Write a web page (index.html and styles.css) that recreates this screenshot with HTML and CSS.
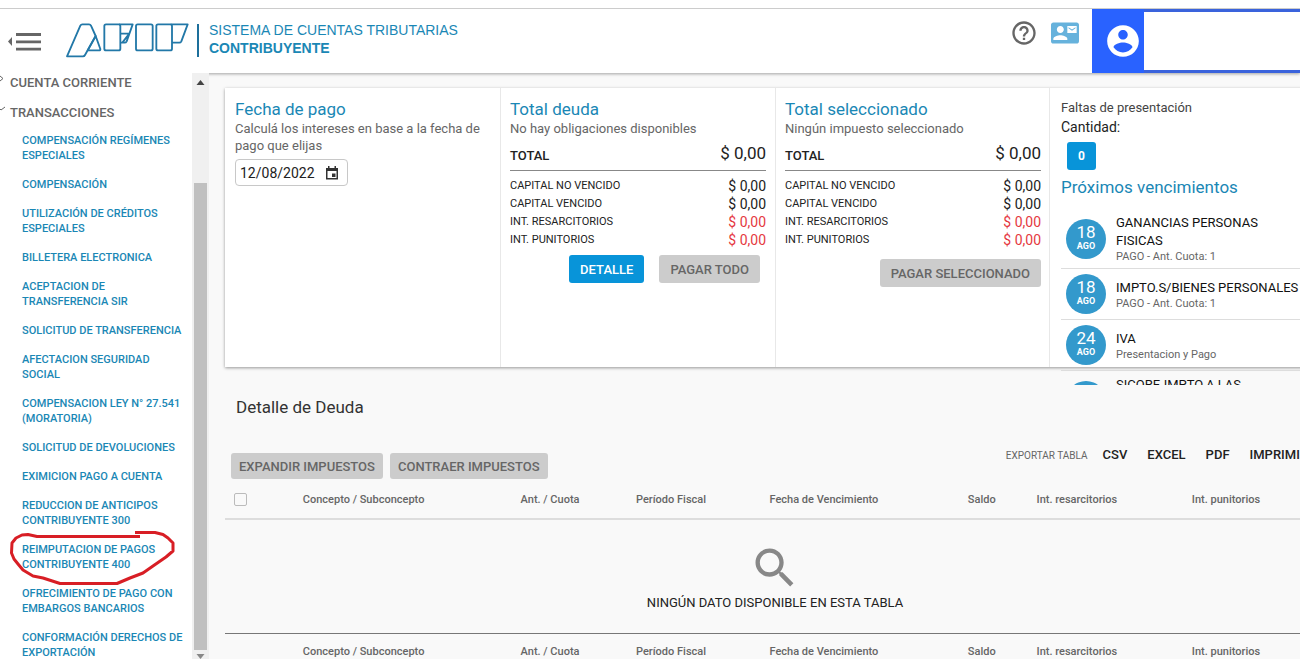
FILE: index.html
```html
<!DOCTYPE html>
<html lang="es">
<head>
<meta charset="utf-8">
<title>Sistema de Cuentas Tributarias</title>
<link rel="stylesheet" href="styles.css">
</head>
<body>
<header class="topbar">
  <button class="menu-toggle" aria-label="Ocultar menú">
    <svg width="34" height="20" viewBox="0 0 34 20"><path d="M4 5v9L0 9.500z" fill="#666"/><path d="M8 2.500h25M8 9.800h25M8 17.200h25" stroke="#666" stroke-width="2.800"/></svg>
  </button>
  <svg class="logo" viewBox="197 71 369 105" role="img" aria-label="AFIP">
    <g fill="none" stroke="#2278a8" stroke-width="5.500" stroke-linejoin="round">
      <path d="M200 171 240 79q2-4 6-4h20q4 0 6 4l14 31-32 57q-2 4-6 4z"/>
      <path d="M286 110 300 149q1 4-4 4h-34z"/>
      <rect x="312" y="75" width="48" height="78" rx="5"/>
      <path d="M356 75h41l-18 51q-2 4-6 4h-13M360 103h27l-21 27"/>
      <rect x="407" y="75" width="50" height="78" rx="5"/>
      <rect x="468" y="75" width="47" height="78" rx="5"/>
      <path d="M511 75h51l-19 51q-2 4-6 4h-22"/>
    </g>
  </svg>
  <div class="brand">
    <span>SISTEMA DE CUENTAS TRIBUTARIAS</span>
    <strong>CONTRIBUYENTE</strong>
  </div>
  <div class="tools">
    <button class="tool" aria-label="Ayuda">
      <svg width="28" height="28" viewBox="0 0 24 24" fill="#666"><path d="M11 18h2v-2h-2v2zm1-16C6.480 2 2 6.480 2 12s4.480 10 10 10 10-4.480 10-10S17.520 2 12 2zm0 18c-4.410 0-8-3.590-8-8s3.590-8 8-8 8 3.590 8 8-3.590 8-8 8zm0-14c-2.210 0-4 1.790-4 4h2c0-1.100.9-2 2-2s2 .9 2 2c0 2-3 1.750-3 5h2c0-2.250 3-2.500 3-5 0-2.210-1.790-4-4-4z"/></svg>
    </button>
    <button class="tool" aria-label="Contacto">
      <svg width="28" height="28" viewBox="0 0 24 24" fill="#66b2dc"><path d="M21 8V7l-3 2-3-2v1l3 2 3-2zm1-5H2C.9 3 0 3.900 0 5v14c0 1.100.9 2 2 2h20c1.100 0 1.990-.9 1.990-2L24 5c0-1.100-.9-2-2-2zM8 6c1.660 0 3 1.340 3 3s-1.340 3-3 3-3-1.340-3-3 1.340-3 3-3zm6 12H2v-1c0-2 4-3.100 6-3.100s6 1.100 6 3.100v1zm8-6h-8V6h8v6z"/></svg>
    </button>
  </div>
  <div class="account">
    <button class="avatar" aria-label="Cuenta">
      <svg width="38" height="38" viewBox="0 0 24 24" fill="#fff"><path d="M12 2C6.480 2 2 6.480 2 12s4.480 10 10 10 10-4.480 10-10S17.520 2 12 2zm0 3c1.660 0 3 1.340 3 3s-1.340 3-3 3-3-1.340-3-3 1.340-3 3-3zm0 14.200c-2.500 0-4.710-1.280-6-3.220.03-1.990 4-3.080 6-3.080 1.990 0 5.970 1.090 6 3.080-1.290 1.940-3.500 3.220-6 3.220z"/></svg>
    </button>
  </div>
</header>

<div class="shell">
  <nav class="sidebar">
    <div class="menu">
      <button class="section"><svg class="chev" viewBox="0 0 6 10"><path d="M0 2l3 2.500L0 7"/></svg>CUENTA CORRIENTE</button>
      <button class="section"><svg class="chev" viewBox="0 0 6 10"><path d="M-1 4l2 2 4-3"/></svg>TRANSACCIONES</button>
      <ul class="links">
        <li><a href="#">COMPENSACIÓN REGÍMENES ESPECIALES</a></li>
        <li><a href="#">COMPENSACIÓN</a></li>
        <li><a href="#">UTILIZACIÓN DE CRÉDITOS ESPECIALES</a></li>
        <li><a href="#">BILLETERA ELECTRONICA</a></li>
        <li><a href="#">ACEPTACION DE<br>TRANSFERENCIA SIR</a></li>
        <li><a href="#">SOLICITUD DE TRANSFERENCIA</a></li>
        <li><a href="#">AFECTACION SEGURIDAD SOCIAL</a></li>
        <li><a href="#">COMPENSACION LEY N° 27.541 (MORATORIA)</a></li>
        <li><a href="#">SOLICITUD DE DEVOLUCIONES</a></li>
        <li><a href="#">EXIMICION PAGO A CUENTA</a></li>
        <li><a href="#">REDUCCION DE ANTICIPOS CONTRIBUYENTE 300</a></li>
        <li class="marked"><a href="#">REIMPUTACION DE PAGOS CONTRIBUYENTE 400</a>
          <svg class="mark" width="170" height="60" viewBox="0 0 170 60"><path d="M131 9.500H28L19 7.500 13 8 7 11 3 16 2.500 26 5 32 9 37 14 43 24 49 34 51 51 56.500H108L121 51 134 46 144 39 157 30 164 24V16L159 11 154 7.500 146 5.500H126" fill="none" stroke="#d81e25" stroke-width="3" stroke-linejoin="round"/></svg></li>
        <li><a href="#">OFRECIMIENTO DE PAGO CON EMBARGOS BANCARIOS</a></li>
        <li><a href="#">CONFORMACIÓN DERECHOS DE EXPORTACIÓN</a></li>
      </ul>
    </div>
    <div class="scroll" aria-hidden="true">
      <svg width="9" height="5" viewBox="0 0 9 5"><path d="M4.500 0 8.500 5h-8z" fill="#444"/></svg>
      <div class="track"><div class="thumb"></div></div>
      <svg width="9" height="5" viewBox="0 0 9 5"><path d="M4.500 5 8.500 0h-8z" fill="#888"/></svg>
    </div>
  </nav>

  <main class="content">
    <section class="cards">
      <article class="card">
        <h2>Fecha de pago</h2>
        <label class="hint" for="fecha">Calculá los intereses en base a la fecha de pago que elijas</label>
        <div class="date">
          <input id="fecha" type="text" value="12/08/2022">
          <button aria-label="Abrir calendario"><svg width="14" height="14" viewBox="0 0 14 14" fill="#333"><path fill-rule="evenodd" d="M1 2h2V0h1.500v2h5V0H11v2h2v11.500H1zM2.500 5v7h9V5z"/><path d="M7 7.500h3.500V11H7z"/></svg></button>
        </div>
      </article>
      <article class="card">
        <h2>Total deuda</h2>
        <p class="hint">No hay obligaciones disponibles</p>
        <dl class="total"><dt>TOTAL</dt><dd>$ 0,00</dd></dl>
        <dl class="lines">
          <dt>CAPITAL NO VENCIDO</dt><dd>$ 0,00</dd>
          <dt>CAPITAL VENCIDO</dt><dd>$ 0,00</dd>
          <dt>INT. RESARCITORIOS</dt><dd class="red">$ 0,00</dd>
          <dt>INT. PUNITORIOS</dt><dd class="red">$ 0,00</dd>
        </dl>
        <div class="actions"><button class="btn primary">DETALLE</button><button class="btn">PAGAR TODO</button></div>
      </article>
      <article class="card selected">
        <h2>Total seleccionado</h2>
        <p class="hint">Ningún impuesto seleccionado</p>
        <dl class="total"><dt>TOTAL</dt><dd>$ 0,00</dd></dl>
        <dl class="lines">
          <dt>CAPITAL NO VENCIDO</dt><dd>$ 0,00</dd>
          <dt>CAPITAL VENCIDO</dt><dd>$ 0,00</dd>
          <dt>INT. RESARCITORIOS</dt><dd class="red">$ 0,00</dd>
          <dt>INT. PUNITORIOS</dt><dd class="red">$ 0,00</dd>
        </dl>
        <div class="actions single"><button class="btn">PAGAR SELECCIONADO</button></div>
      </article>
      <article class="card dues">
        <p class="faltas">Faltas de presentación</p>
        <p class="cantidad">Cantidad:</p>
        <button class="btn primary count">0</button>
        <h2>Próximos vencimientos</h2>
        <ul class="due-list">
          <li><time class="day"><b>18</b><i>AGO</i></time><div><p>GANANCIAS PERSONAS<br>FISICAS</p><small>PAGO - Ant. Cuota: 1</small></div></li>
          <li><time class="day"><b>18</b><i>AGO</i></time><div><p>IMPTO.S/BIENES PERSONALES</p><small>PAGO - Ant. Cuota: 1</small></div></li>
          <li><time class="day"><b>24</b><i>AGO</i></time><div><p>IVA</p><small>Presentacion y Pago</small></div></li>
          <li class="next"><time class="day"></time><div><p>SICORE-IMPTO.A LAS</p></div></li>
        </ul>
      </article>
    </section>

    <section class="detail">
      <h3>Detalle de Deuda</h3>
      <div class="toolbar">
        <button class="btn small">EXPANDIR IMPUESTOS</button>
        <button class="btn small">CONTRAER IMPUESTOS</button>
        <div class="export"><span>EXPORTAR TABLA</span><button>CSV</button><button>EXCEL</button><button>PDF</button><button>IMPRIMIR</button></div>
      </div>
      <table>
        <colgroup><col class="c-check"><col class="c-concept"><col class="c-ant"><col class="c-period"><col class="c-date"><col class="c-balance"><col class="c-res"><col class="c-pun"></colgroup>
        <thead><tr><th><input type="checkbox" aria-label="Seleccionar todo"></th><th>Concepto / Subconcepto</th><th>Ant. / Cuota</th><th>Período Fiscal</th><th>Fecha de Vencimiento</th><th>Saldo</th><th>Int. resarcitorios</th><th>Int. punitorios</th></tr></thead>
        <tbody><tr><td colspan="8"><div class="empty">
          <svg width="52" height="52" viewBox="0 0 24 24" fill="#888"><path d="M15.500 14h-.79l-.28-.27C15.410 12.590 16 11.110 16 9.500 16 5.910 13.090 3 9.500 3S3 5.910 3 9.500 5.910 16 9.500 16c1.610 0 3.090-.59 4.230-1.570l.27.28v.79l5 4.990L20.490 19l-4.990-5zm-6 0C7.010 14 5 11.990 5 9.500S7.010 5 9.500 5 14 7.010 14 9.500 11.990 14 9.500 14z"/></svg>
          <p>NINGÚN DATO DISPONIBLE EN ESTA TABLA</p></div></td></tr></tbody>
        <tfoot><tr><th></th><th>Concepto / Subconcepto</th><th>Ant. / Cuota</th><th>Período Fiscal</th><th>Fecha de Vencimiento</th><th>Saldo</th><th>Int. resarcitorios</th><th>Int. punitorios</th></tr></tfoot>
      </table>
    </section>
  </main>
</div>
</body>
</html>
```
FILE: styles.css
```css
* { box-sizing: border-box; }
body {
  margin: 0;
  height: 100vh;
  display: flex;
  flex-direction: column;
  overflow: hidden;
  background: #f9f9f9;
  color: #222;
  font-family: Roboto, "Liberation Sans", sans-serif;
}
button, input { font: inherit; color: inherit; margin: 0; }
button { padding: 0; border: 0; background: none; cursor: pointer; }
h2, h3, p, ul, dl, dd { margin: 0; padding: 0; }
ul { list-style: none; }
svg { display: block; flex: none; }

/* Header */
.topbar {
  position: relative;
  z-index: 1;
  flex: none;
  display: flex;
  align-items: flex-start;
  height: 73px;
  padding-top: 8px;
  background: linear-gradient(#fff 8px, #ccc 8px, #ccc 9px, #fff 9px);
  box-shadow: 0 1px 3px rgba(0, 0, 0, .35);
}
.menu-toggle { margin: 24px 0 0 8px; }
.logo { width: 123px; height: 35px; margin: 15px 8px 0 24px; }
.brand {
  margin-top: 16px;
  padding-left: 10px;
  border-left: 2px solid #1d6f9b;
  color: #1a87b5;
  font: 14px/18px "Liberation Sans", Arial, sans-serif;
  display: flex;
  flex-direction: column;
  height: 33px;
  justify-content: flex-end;
}
.tools { display: flex; gap: 13px; margin: 11px 13px 0 auto; }
.account {
  display: flex;
  width: 16%;
  height: 64px;
  margin-top: 1px;
  border: solid #3a63dc;
  border-width: 3px 0;
}
.avatar {
  display: flex;
  align-items: center;
  justify-content: flex-end;
  width: 52px;
  padding-right: 2px;
  margin: -3px 0;
  background: #2962ff;
}

/* Sidebar */
.shell { flex: 1; display: flex; min-height: 0; }
.sidebar {
  position: relative;
  z-index: 2;
  flex: none;
  display: flex;
  width: 209px;
  background: #fff;
}
.menu { flex: 1; overflow: hidden; }
.section {
  display: flex;
  align-items: center;
  width: 100%;
  height: 30px;
  color: #666;
  font-size: 13px;
  font-weight: 500;
  white-space: nowrap;
}
.section:first-child { margin-top: -6px; }
.chev { width: 6px; height: 10px; margin: 0 4px 6px 0; fill: none; stroke: #666; }
.links { padding: 6px 4px 0 22px; }
.links li { position: relative; margin-bottom: 14px; font-size: 11px; line-height: 15px; font-weight: 500; }
.links a { display: block; color: #1a87b5; text-decoration: none; }
.mark { position: absolute; left: -13px; top: -15px; pointer-events: none; }
.scroll {
  display: flex;
  flex-direction: column;
  align-items: center;
  gap: 4px;
  width: 17px;
  padding: 7px 0 0;
  background: #f0f0f0;
}
.track { flex: 1; width: 13px; padding-top: 94px; display: flex; }
.thumb { flex: 1; background: #c0c0c0; }

/* Summary cards */
.content { flex: 1; min-width: 0; padding: 15px 0 0 16px; margin-right: -25px; }
.cards {
  display: grid;
  grid-template-columns: repeat(4, 1fr);
  grid-template-rows: 100%;
  height: 279px;
  background: #fff;
  box-shadow: 0 1px 3px rgba(0, 0, 0, .4);
}
.card { padding: 10px 9px 0; border-left: 1px solid #e8e8e8; }
.card:first-child { padding-left: 10px; border-left: 0; }
.card.selected { padding-right: 8px; border-right: 1px solid #e8e8e8; }
h2 { color: #1a87b5; font-size: 17px; font-weight: 400; line-height: 22px; }
.hint { display: block; color: #666; font-size: 13px; line-height: 17px; }
.date {
  display: flex;
  align-items: center;
  width: 113px;
  height: 27px;
  margin-top: 5px;
  padding: 0 8px 0 4px;
  border: 1px solid #c8c8c8;
  border-radius: 4px;
}
.date input { flex: 1; min-width: 0; padding: 0; border: 0; outline: 0; background: none; font-size: 14px; }
.total {
  display: flex;
  justify-content: space-between;
  align-items: center;
  height: 34px;
  border-bottom: 1px solid #888;
}
.total dt { padding-top: 4px; font-size: 13px; font-weight: 500; }
.total dd { font-size: 17px; padding-bottom: 2px; }
.lines {
  display: grid;
  grid-template-columns: 1fr auto;
  grid-auto-rows: 18px;
  padding-top: 6px;
  font-size: 11px;
  line-height: 18px;
}
.lines dd { font-size: 14px; text-align: right; }
.lines .red { color: #e5393f; }
.actions { display: flex; justify-content: flex-end; gap: 15px; padding: 6px 6px 0 0; }
.actions.single { padding: 10px 0 0; }
.btn {
  height: 28px;
  padding: 0 11px;
  border-radius: 3px;
  background: #ccc;
  color: #666;
  font-size: 13px;
  font-weight: 500;
  white-space: nowrap;
}
.btn.primary { background: #0894d9; color: #fff; }
.card.dues { height: 297px; padding-left: 11px; border-left: 0; overflow: hidden; }
.faltas { color: #444; font-size: 13px; line-height: 20px; }
.cantidad { font-size: 14px; line-height: 18px; }
.btn.count { display: block; width: 29px; margin: 6px; padding: 0; font-size: 12px; font-weight: 700; }
.due-list { margin-top: 11px; }
.due-list li {
  display: flex;
  align-items: center;
  gap: 10px;
  min-height: 51px;
  padding: 5px 0 5px 5px;
  border-bottom: 1px solid #ddd;
}
.due-list .next { align-items: flex-start; }
.next .day { margin-top: 5px; }
.due-list p { color: #111; font-size: 13px; line-height: 18px; white-space: nowrap; }
.due-list small { display: block; color: #666; font-size: 11px; line-height: 13px; }
.day {
  flex: none;
  display: flex;
  flex-direction: column;
  align-items: center;
  width: 40px;
  height: 40px;
  padding-top: 4px;
  border-radius: 50%;
  background: #3399cc;
  color: #fff;
}
.day b { font-size: 17px; font-weight: 400; line-height: 18px; }
.day i { font-size: 9px; font-style: normal; font-weight: 700; line-height: 11px; }

/* Debt detail */
h3 { padding: 29px 11px 0; font-size: 17px; font-weight: 400; line-height: 22px; color: #333; }
.toolbar { display: flex; align-items: flex-end; gap: 7px; height: 26px; margin-top: 35px; padding: 0 17px 0 6px; }
.btn.small { height: 26px; padding: 0 8px; }
.export { display: flex; align-items: baseline; gap: 20px; height: 32px; margin-left: auto; }
.export span { margin-right: -5px; color: #666; font-size: 10px; white-space: nowrap; }
.export button { font-size: 13px; font-weight: 500; }
table { width: 100%; border-collapse: collapse; table-layout: fixed; }
.c-check { width: 3%; }
.c-concept { width: 19.2%; }
.c-ant { width: 14.7%; }
.c-period { width: 7.3%; }
.c-date { width: 20.5%; }
.c-balance { width: 8.2%; }
.c-res { width: 9.1%; }
.c-pun { width: 18%; }
th { height: 40px; padding: 0; color: #666; font-size: 11px; font-weight: 500; white-space: nowrap; }
thead th { padding-top: 1px; border-bottom: 2px solid #ddd; }
tfoot th { height: 36px; border-top: 1px solid #777; }
td { padding: 0; }
th input {
  display: block;
  appearance: none;
  width: 13px;
  height: 13px;
  margin-left: 9px;
  border: 1px solid #bbb;
  border-radius: 2px;
}
.empty { display: flex; flex-direction: column; align-items: center; padding: 22px 0 21px; }
.empty p { font-size: 13px; line-height: 18px; }
```
